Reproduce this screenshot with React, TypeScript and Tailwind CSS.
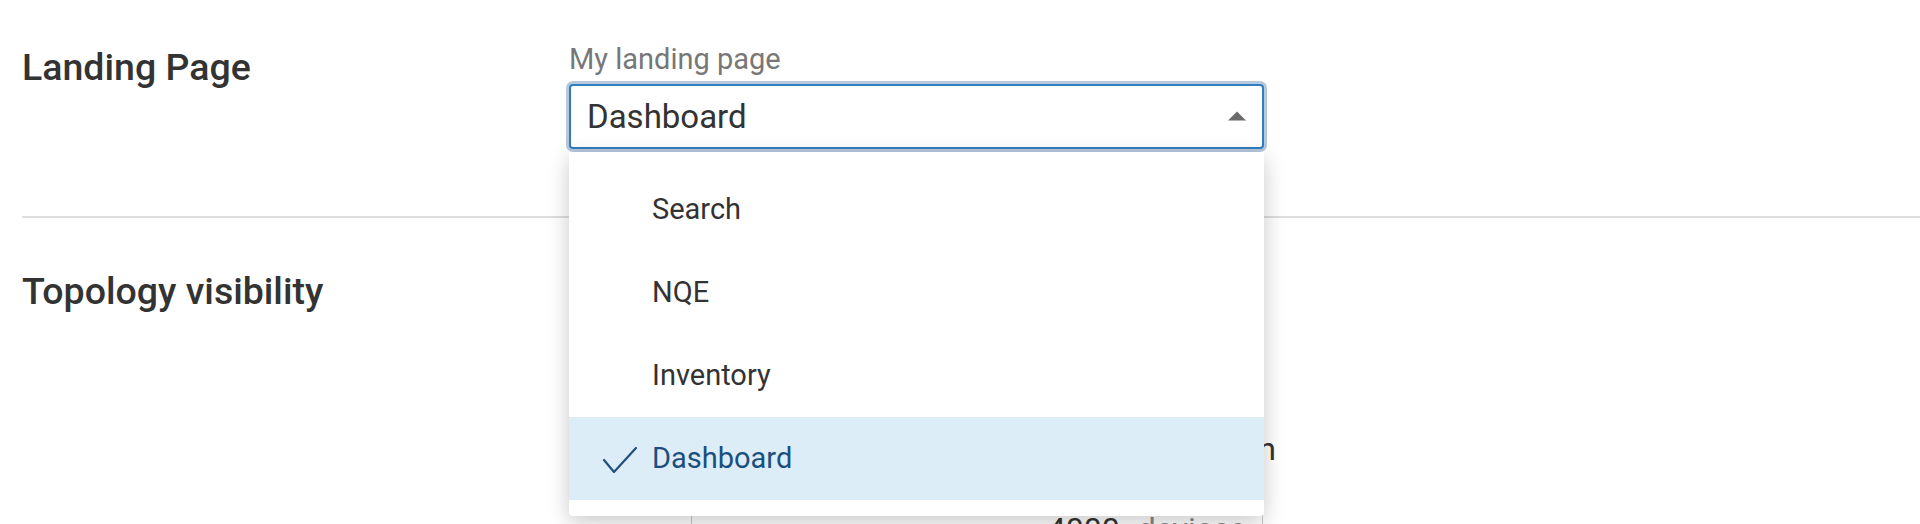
import React from "react";

const items = ["Search", "NQE", "Inventory", "Dashboard"];

export default function App() {
  return (
    <div className="relative w-[1920px] h-[524px] overflow-hidden bg-white font-['Roboto',sans-serif] text-[#333]">
      {/* Section 1 */}
      <div className="flex h-[216px] pl-[22px]">
        <div className="w-[547px]">
          <h2 className="mt-[46px] text-[37.5px] leading-[43px] font-medium text-[#333]">Landing Page</h2>
        </div>
        <div className="w-[695px]">
          <div className="mt-[42px] text-[29px] leading-[34px] text-[#777]">My landing page</div>
          <div className="mt-[8px] flex h-[65px] items-center justify-between rounded-[4px] border-2 border-[#2f7ec2] bg-white pl-[16px] pr-[16px] shadow-[0_0_0_3px_#b7c8db]">
            <span className="text-[33px] leading-[39px] text-[#333]">Dashboard</span>
            <svg width="18" height="10" viewBox="0 0 18 10" className="mb-[1px]">
              <polygon points="0,9.5 9,0.5 18,9.5" fill="#6b6b6b" />
            </svg>
          </div>
        </div>
      </div>
      {/* Divider */}
      <div className="ml-[22px] h-[2px] bg-[#dedede]" />
      {/* Section 2 */}
      <div className="flex pl-[22px]">
        <div className="w-[547px]">
          <h2 className="mt-[52px] text-[37.5px] leading-[43px] font-medium text-[#333]">Topology visibility</h2>
        </div>
        <div className="flex flex-col pl-[122px]">
          <div className="mt-[212px] flex w-[585px] justify-end whitespace-nowrap text-[32px] leading-[38px] text-[#333]">
            Hide topology for large networks when
          </div>
          <div className="mt-[28px] flex h-[64px] w-[572px] items-start justify-end gap-[18px] rounded-[4px] border border-[#c8c8c8] pr-[16px] pt-[13px] text-[32px] leading-[38px]">
            <span className="text-[#333]">4000</span>
            <span className="text-[#888]">devices</span>
          </div>
        </div>
      </div>

      {/* Open dropdown menu */}
      <div className="absolute left-[569px] top-[152px] w-[695px] rounded-b-[4px] bg-white py-[16px] shadow-[0_6px_22px_rgba(0,0,0,0.22)]">
        {items.map((it) => {
          const sel = it === "Dashboard";
          return (
            <div
              key={it}
              className={
                sel
                  ? "relative flex h-[83px] items-center bg-[#ddedf8] pl-[83px] text-[29px] leading-[83px] text-[#1b4f7f]"
                  : "relative flex h-[83px] items-center pl-[83px] text-[29px] leading-[83px] text-[#333]"
              }
            >
              {sel && (
                <svg
                  width="36"
                  height="28"
                  viewBox="0 0 36 28"
                  className="absolute left-[33px] top-[29px]"
                  fill="none"
                >
                  <polyline
                    points="2,14 12,26 34,2"
                    stroke="#1f4f7d"
                    strokeWidth="2.2"
                    strokeLinecap="round"
                    strokeLinejoin="round"
                  />
                </svg>
              )}
              {it}
            </div>
          );
        })}
      </div>
    </div>
  );
}
